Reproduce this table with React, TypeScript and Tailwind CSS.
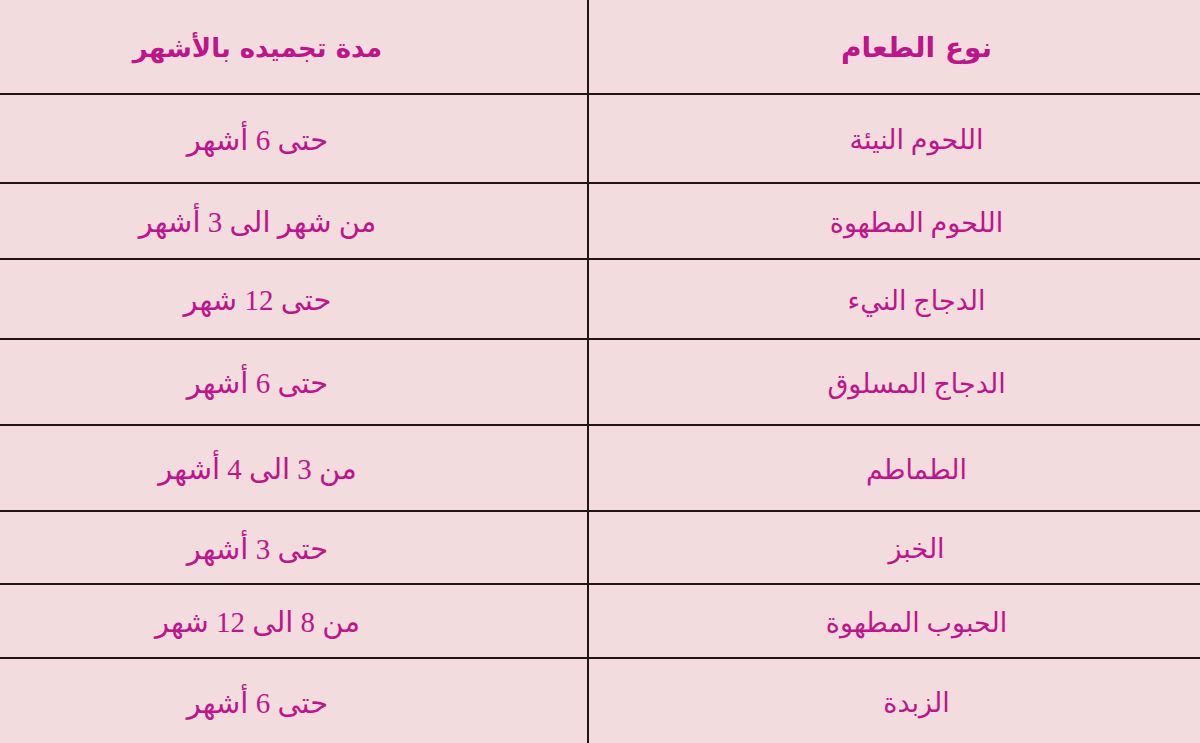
const rows: [string, string][] = [
  ["اللحوم النيئة", "حتى 6 أشهر"],
  ["اللحوم المطهوة", "من شهر الى 3 أشهر"],
  ["الدجاج النيء", "حتى 12 شهر"],
  ["الدجاج المسلوق", "حتى 6 أشهر"],
  ["الطماطم", "من 3 الى 4 أشهر"],
  ["الخبز", "حتى 3 أشهر"],
  ["الحبوب المطهوة", "من 8 الى 12 شهر"],
  ["الزبدة", "حتى 6 أشهر"],
];

const heights = ["h-[89px]", "h-[76px]", "h-[80px]", "h-[86px]", "h-[86px]", "h-[73px]", "h-[74px]", "h-[85px]"];

export default function App() {
  return (
    <div className="h-[743px] w-[1200px] overflow-hidden bg-[#f2dcdd]">
      <div dir="rtl" className="grid grid-cols-[613px_587px] text-[#c0148c]">
        {/* header */}
        <div className="flex h-[95px] items-center justify-center border-b-2 border-l-2 border-[#1e1616] pt-[3px] pl-[44px] font-['DejaVu_Sans',sans-serif] text-[28px] font-bold">
          نوع الطعام
        </div>
        <div className="flex h-[95px] items-center justify-center border-b-2 border-[#1e1616] pt-[3px] pr-[72px] font-['DejaVu_Sans',sans-serif] text-[26px] font-bold">
          مدة تجميده بالأشهر
        </div>

        {rows.map(([food, period], i) => {
          const last = i === rows.length - 1;
          return [
            <div
              key={`f${i}`}
              className={`flex ${heights[i]} items-center justify-center border-l-2 ${last ? "" : "border-b-2"} border-[#1e1616] pt-[4px] pl-[44px] font-['Liberation_Serif','DejaVu_Sans',serif] text-[27px]`}
            >
              {food}
            </div>,
            <div
              key={`p${i}`}
              className={`flex ${heights[i]} items-center justify-center ${last ? "" : "border-b-2"} border-[#1e1616] pt-[4px] pr-[72px] font-['Liberation_Serif','DejaVu_Sans',serif] text-[29px]`}
            >
              {period}
            </div>,
          ];
        })}
      </div>
    </div>
  );
}
